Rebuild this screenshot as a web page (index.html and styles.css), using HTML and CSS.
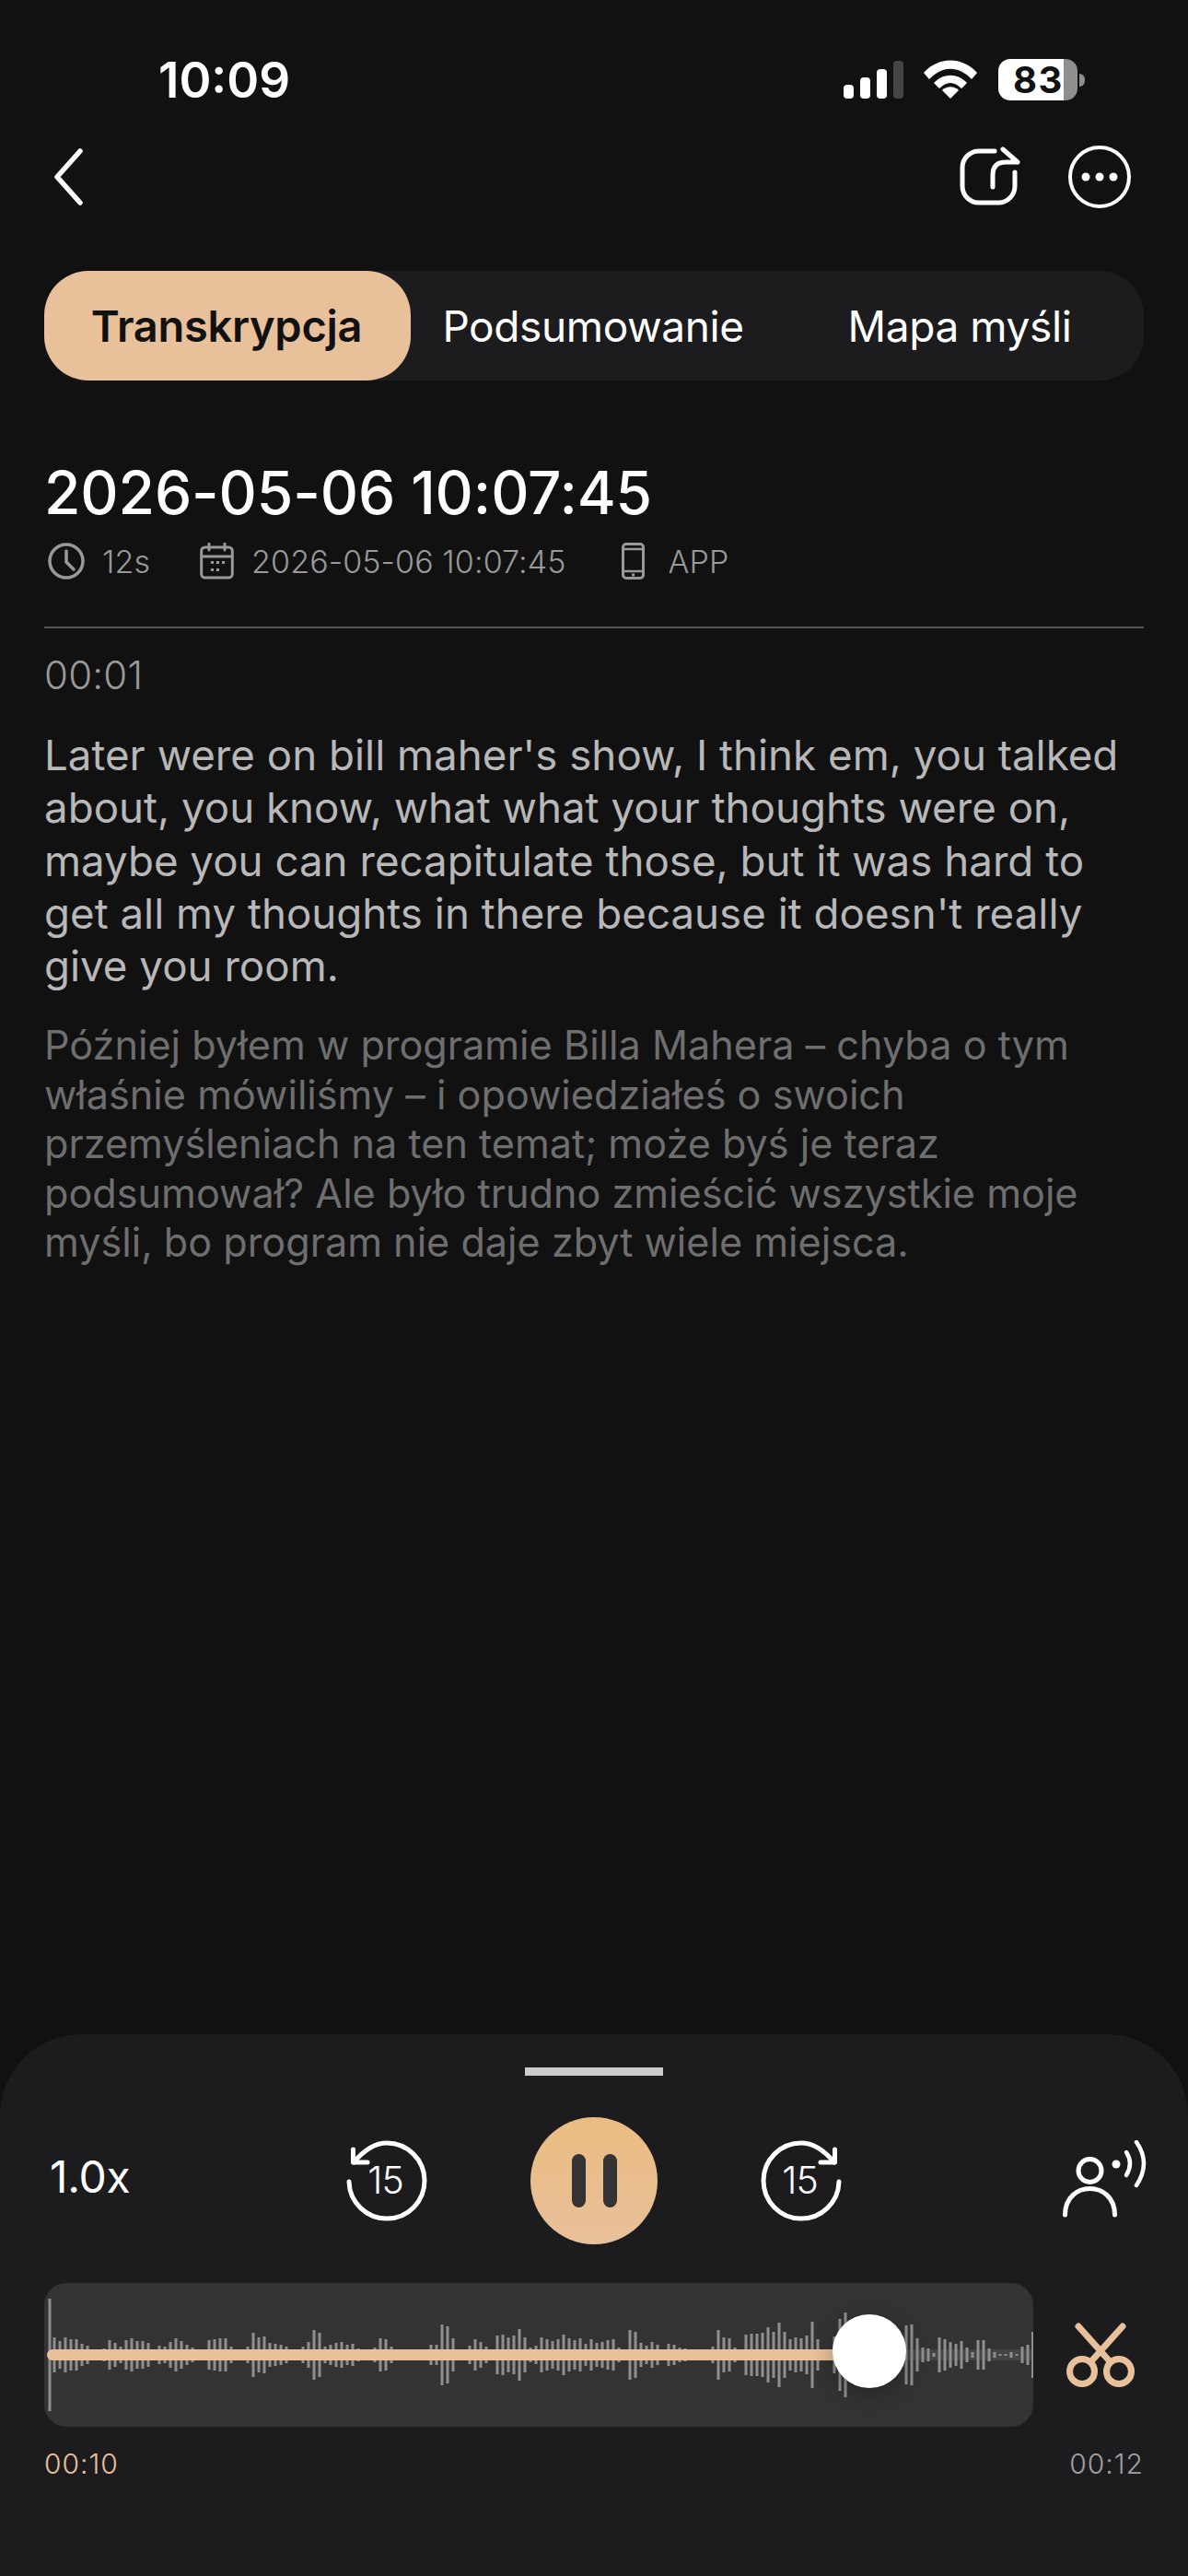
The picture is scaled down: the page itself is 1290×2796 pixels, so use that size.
FILE: index.html
```html
<!DOCTYPE html>
<html lang="pl">
<head>
<meta charset="utf-8">
<title>Transkrypcja</title>
<link rel="stylesheet" href="styles.css">
</head>
<body>
<div class="screen">
  <header class="status">
    <span class="clock">10:09</span>
    <div class="status-icons">
      <svg class="signal" width="65" height="41" viewBox="0 0 65 41"><rect x="0" y="26" width="11" height="15" rx="4" fill="#fff"/><rect x="18" y="18" width="11" height="23" rx="4" fill="#fff"/><rect x="36" y="9" width="11" height="32" rx="4" fill="#fff"/><rect x="54" y="0" width="11" height="41" rx="4" fill="#444"/></svg>
      <svg class="wifi" width="58" height="42" viewBox="0 0 58 42"><path d="M0 14 C16 -4 42 -4 58 14 L52 21 C38 6 20 6 6 21Z" fill="#fff"/><path d="M11 25 C21 14 37 14 47 25 L41 31 C33 23 25 23 17 31Z" fill="#fff"/><path d="M20 33 C25 28 33 28 38 33 L29 42Z" fill="#fff"/></svg>
      <div class="battery"><div class="battery-body"><span class="battery-text">83</span></div><span class="battery-cap"></span></div>
    </div>
  </header>

  <nav class="nav">
    <svg class="back" width="31" height="62" viewBox="0 0 31 62"><path d="M28 3 L3 31 L28 59" fill="none" stroke="#fff" stroke-width="5.500" stroke-linecap="round" stroke-linejoin="round"/></svg>
    <div class="nav-actions">
      <svg width="66" height="66" viewBox="0 0 66 66"><path d="M38 5 H22 A18 18 0 0 0 3 23 V43 A18 18 0 0 0 22 61 H42 A18 18 0 0 0 60 43 V28" fill="none" stroke="#fff" stroke-width="5" stroke-linecap="round"/><path d="M36 44 V31 Q36 17 50 17 H62 M47 3 L63 17" fill="none" stroke="#fff" stroke-width="5" stroke-linecap="round" stroke-linejoin="round"/></svg>
      <svg width="68" height="68" viewBox="0 0 68 68"><circle cx="34" cy="34" r="32" fill="none" stroke="#fff" stroke-width="4"/><circle cx="19" cy="34" r="4.500" fill="#fff"/><circle cx="34" cy="34" r="4.500" fill="#fff"/><circle cx="49" cy="34" r="4.500" fill="#fff"/></svg>
    </div>
  </nav>

  <div class="tabs">
    <span class="tab tab-active">Transkrypcja</span>
    <span class="tab">Podsumowanie</span>
    <span class="tab">Mapa myśli</span>
  </div>

  <main class="content">
    <h1 class="title">2026-05-06 10:07:45</h1>
    <div class="meta">
      <span class="meta-item meta-dur">
        <svg width="40" height="40" viewBox="0 0 40 40"><circle cx="20" cy="20" r="18" fill="none" stroke="#999" stroke-width="3.500"/><path d="M20 9 V21 L28 29" fill="none" stroke="#999" stroke-width="3.500" stroke-linecap="round" stroke-linejoin="round"/></svg>
        12s
      </span>
      <span class="meta-item meta-date">
        <svg width="37" height="40" viewBox="0 0 37 40"><rect x="1.700" y="5" width="33.600" height="33" rx="4" fill="none" stroke="#999" stroke-width="3"/><path d="M2 15 H35 M10 1 V8 M27 1 V8" stroke="#999" stroke-width="3" stroke-linecap="round"/><g fill="#999"><rect x="12" y="20" width="3" height="3"/><rect x="18" y="20" width="3" height="3"/><rect x="24" y="20" width="3" height="3"/><rect x="12" y="28" width="3" height="3"/><rect x="18" y="28" width="3" height="3"/></g></svg>
        2026-05-06 10:07:45
      </span>
      <span class="meta-item meta-src">
        <svg width="25" height="40" viewBox="0 0 25 40"><rect x="1.500" y="1.500" width="22" height="37" rx="3.500" fill="none" stroke="#999" stroke-width="3"/><path d="M2 7 H23 M2 31 H23" stroke="#999" stroke-width="2.500"/><rect x="11" y="33.500" width="3" height="3" fill="#999"/></svg>
        APP
      </span>
    </div>
    <hr class="divider">
    <div class="stamp">00:01</div>
    <p class="source">Later were on bill maher's show, I think em, you talked<br>about, you know, what what your thoughts were on,<br>maybe you can recapitulate those, but it was hard to<br>get all my thoughts in there because it doesn't really<br>give you room.</p>
    <p class="translation">Później byłem w programie Billa Mahera – chyba o tym<br>właśnie mówiliśmy – i opowiedziałeś o swoich<br>przemyśleniach na ten temat; może byś je teraz<br>podsumował? Ale było trudno zmieścić wszystkie moje<br>myśli, bo program nie daje zbyt wiele miejsca.</p>
  </main>

  <section class="player">
    <div class="handle"></div>
    <div class="controls">
      <span class="speed">1.0x</span>
      <div class="transport">
        <div class="skip">
          <svg width="90" height="90" viewBox="0 0 90 90"><path d="M4 46 A41 41 0 1 0 45 4 Q27 4 9 25" fill="none" stroke="#fff" stroke-width="5" stroke-linecap="round"/><path d="M8.500 11 V25 H24" fill="none" stroke="#fff" stroke-width="5" stroke-linecap="round" stroke-linejoin="round"/></svg>
          <span class="skip-num">15</span>
        </div>
        <div class="play">
          <span class="pause-bar"></span><span class="pause-bar"></span>
        </div>
        <div class="skip">
          <svg width="90" height="90" viewBox="0 0 90 90"><path d="M86 46 A41 41 0 1 1 45 4 Q63 4 81 25" fill="none" stroke="#fff" stroke-width="5" stroke-linecap="round"/><path d="M81.500 11 V25 H66" fill="none" stroke="#fff" stroke-width="5" stroke-linecap="round" stroke-linejoin="round"/></svg>
          <span class="skip-num">15</span>
        </div>
      </div>
      <svg class="speaker" width="93" height="84" viewBox="0 0 93 84"><ellipse cx="29.500" cy="33" rx="12.500" ry="12.500" fill="none" stroke="#fff" stroke-width="5"/><path d="M2.500 81 C2.500 43 56.500 43 56.500 81" fill="none" stroke="#fff" stroke-width="5" stroke-linecap="round"/><circle cx="58" cy="26" r="4.500" fill="#fff"/><path d="M69 13 Q77 25 69 38" fill="none" stroke="#fff" stroke-width="4.500" stroke-linecap="round"/><path d="M80 2 Q96 25 80 49" fill="none" stroke="#fff" stroke-width="4.500" stroke-linecap="round"/></svg>
    </div>
    <div class="scrub">
      <div class="wave-panel">
        <svg class="wave" width="1074" height="156" viewBox="48 2478 1074 156">
          <rect x="948" y="2550" width="174" height="12" fill="#fff" opacity=".09"/>
          <g fill="#8f8f8f">
            <rect x="52.500" y="2495" width="3" height="122"/><rect x="57.500" y="2537" width="3" height="38"/><rect x="63.500" y="2541" width="3" height="30"/><rect x="69.500" y="2537" width="3" height="38"/><rect x="75.500" y="2539" width="3" height="34"/><rect x="81.500" y="2539" width="3" height="34"/><rect x="87.500" y="2544" width="3" height="24"/><rect x="93.500" y="2546" width="3" height="20"/>
            <rect x="111.500" y="2549" width="3" height="14"/><rect x="117.500" y="2540" width="3" height="32"/><rect x="123.500" y="2543" width="3" height="26"/><rect x="129.500" y="2547" width="3" height="18"/><rect x="135.500" y="2540" width="3" height="32"/><rect x="141.500" y="2538" width="3" height="36"/><rect x="147.500" y="2541" width="3" height="30"/><rect x="153.500" y="2541" width="3" height="30"/><rect x="159.500" y="2543" width="3" height="26"/><rect x="165.500" y="2550" width="3" height="12"/><rect x="171.500" y="2546" width="3" height="20"/><rect x="177.500" y="2547" width="3" height="18"/><rect x="183.500" y="2542" width="3" height="28"/><rect x="189.500" y="2538" width="3" height="36"/><rect x="195.500" y="2541" width="3" height="30"/><rect x="201.500" y="2545" width="3" height="22"/><rect x="207.500" y="2548" width="3" height="16"/>
            <rect x="225.500" y="2540" width="3" height="32"/><rect x="231.500" y="2539" width="3" height="34"/><rect x="237.500" y="2538" width="3" height="36"/><rect x="243.500" y="2538" width="3" height="36"/><rect x="249.500" y="2547" width="3" height="18"/>
            <rect x="267.500" y="2547" width="3" height="18"/><rect x="273.500" y="2532" width="3" height="48"/><rect x="279.500" y="2537" width="3" height="38"/><rect x="285.500" y="2536" width="3" height="40"/><rect x="291.500" y="2543" width="3" height="26"/><rect x="297.500" y="2544" width="3" height="24"/><rect x="303.500" y="2545" width="3" height="22"/><rect x="309.500" y="2547" width="3" height="18"/>
            <rect x="327.500" y="2547" width="3" height="18"/><rect x="333.500" y="2542" width="3" height="28"/><rect x="339.500" y="2529" width="3" height="54"/><rect x="345.500" y="2532" width="3" height="48"/><rect x="351.500" y="2547" width="3" height="18"/><rect x="357.500" y="2545" width="3" height="22"/><rect x="363.500" y="2543" width="3" height="26"/><rect x="369.500" y="2542" width="3" height="28"/><rect x="375.500" y="2545" width="3" height="22"/><rect x="381.500" y="2544" width="3" height="24"/><rect x="387.500" y="2549" width="3" height="14"/>
            <rect x="405.500" y="2548" width="3" height="16"/><rect x="411.500" y="2538" width="3" height="36"/><rect x="417.500" y="2539" width="3" height="34"/><rect x="423.500" y="2547" width="3" height="18"/><rect x="429.500" y="2550" width="3" height="12"/>
            <rect x="466.500" y="2545" width="3" height="22"/><rect x="472.500" y="2545" width="3" height="22"/><rect x="478.500" y="2523" width="3" height="66"/><rect x="484.500" y="2525" width="3" height="62"/><rect x="490.500" y="2538" width="3" height="36"/>
            <rect x="508.500" y="2546" width="3" height="20"/><rect x="514.500" y="2539" width="3" height="34"/><rect x="520.500" y="2542" width="3" height="28"/><rect x="526.500" y="2547" width="3" height="18"/>
            <rect x="538.500" y="2535" width="3" height="42"/><rect x="544.500" y="2534" width="3" height="44"/><rect x="550.500" y="2537" width="3" height="38"/><rect x="556.500" y="2535" width="3" height="42"/><rect x="562.500" y="2528" width="3" height="56"/><rect x="568.500" y="2537" width="3" height="38"/><rect x="574.500" y="2548" width="3" height="16"/><rect x="580.500" y="2546" width="3" height="20"/><rect x="586.500" y="2537" width="3" height="38"/><rect x="592.500" y="2539" width="3" height="34"/><rect x="598.500" y="2541" width="3" height="30"/><rect x="604.500" y="2539" width="3" height="34"/><rect x="610.500" y="2534" width="3" height="44"/><rect x="616.500" y="2538" width="3" height="36"/><rect x="622.500" y="2540" width="3" height="32"/><rect x="628.500" y="2538" width="3" height="36"/><rect x="634.500" y="2544" width="3" height="24"/><rect x="640.500" y="2539" width="3" height="34"/><rect x="646.500" y="2543" width="3" height="26"/><rect x="652.500" y="2542" width="3" height="28"/><rect x="658.500" y="2540" width="3" height="32"/><rect x="664.500" y="2539" width="3" height="34"/><rect x="670.500" y="2548" width="3" height="16"/>
            <rect x="682.500" y="2529" width="3" height="54"/><rect x="688.500" y="2531" width="3" height="50"/><rect x="694.500" y="2543" width="3" height="26"/><rect x="700.500" y="2546" width="3" height="20"/><rect x="706.500" y="2542" width="3" height="28"/><rect x="712.500" y="2545" width="3" height="22"/>
            <rect x="724.500" y="2544" width="3" height="24"/><rect x="730.500" y="2545" width="3" height="22"/><rect x="736.500" y="2548" width="3" height="16"/><rect x="742.500" y="2549" width="3" height="14"/>
            <rect x="772.500" y="2547" width="3" height="18"/><rect x="778.500" y="2529" width="3" height="54"/><rect x="784.500" y="2537" width="3" height="38"/><rect x="790.500" y="2538" width="3" height="36"/><rect x="796.500" y="2548" width="3" height="16"/>
            <rect x="808.500" y="2534" width="3" height="44"/><rect x="814.500" y="2533" width="3" height="46"/><rect x="820.500" y="2533" width="3" height="46"/><rect x="826.500" y="2532" width="3" height="48"/><rect x="832.500" y="2526" width="3" height="60"/><rect x="838.500" y="2531" width="3" height="50"/><rect x="844.500" y="2521" width="3" height="70"/><rect x="850.500" y="2531" width="3" height="50"/><rect x="856.500" y="2539" width="3" height="34"/><rect x="862.500" y="2537" width="3" height="38"/><rect x="868.500" y="2538" width="3" height="36"/><rect x="874.500" y="2535" width="3" height="42"/><rect x="880.500" y="2520" width="3" height="72"/><rect x="886.500" y="2539" width="3" height="34"/>
            <rect x="904.500" y="2536" width="3" height="40"/><rect x="910.500" y="2517" width="3" height="78"/><rect x="916.500" y="2510" width="3" height="92"/>
            <rect x="982.500" y="2524" width="3" height="64"/><rect x="988.500" y="2523" width="3" height="66"/><rect x="994.500" y="2538" width="3" height="36"/><rect x="1000.500" y="2548" width="3" height="16"/><rect x="1006.500" y="2549" width="3" height="14"/><rect x="1012.500" y="2554" width="3" height="4"/><rect x="1018.500" y="2537" width="3" height="38"/><rect x="1024.500" y="2539" width="3" height="34"/><rect x="1030.500" y="2542" width="3" height="28"/><rect x="1036.500" y="2544" width="3" height="24"/><rect x="1042.500" y="2541" width="3" height="30"/><rect x="1048.500" y="2548" width="3" height="16"/><rect x="1054.500" y="2553" width="3" height="6"/><rect x="1060.500" y="2540" width="3" height="32"/><rect x="1066.500" y="2540" width="3" height="32"/><rect x="1072.500" y="2549" width="3" height="14"/><rect x="1078.500" y="2553" width="3" height="6"/><rect x="1084.500" y="2555" width="3" height="2"/><rect x="1090.500" y="2555" width="3" height="2"/><rect x="1096.500" y="2553" width="3" height="6"/><rect x="1102.500" y="2555" width="3" height="2"/><rect x="1108.500" y="2547" width="3" height="18"/><rect x="1114.500" y="2545" width="3" height="22"/><rect x="1120" y="2531" width="2" height="50"/>
          </g>
          <path d="M57 2550 H944 V2562 H57 A6 6 0 0 1 57 2550Z" fill="#e8c09a"/>
        </svg>
        <span class="thumb"></span>
      </div>
      <svg class="scissors" width="74" height="72" viewBox="0 0 74 72"><circle cx="17" cy="54" r="13.500" fill="none" stroke="#e8c09a" stroke-width="7"/><circle cx="57" cy="54" r="13.500" fill="none" stroke="#e8c09a" stroke-width="7"/><path d="M13 5 L47 43 M61 5 L27 43" fill="none" stroke="#e8c09a" stroke-width="7" stroke-linecap="round"/></svg>
    </div>
    <div class="times">
      <span class="time-now">00:10</span>
      <span class="time-total">00:12</span>
    </div>
  </section>
</div>
</body>
</html>
```

FILE: styles.css
```css
* { box-sizing: border-box; }
html, body { margin: 0; padding: 0; }
body { background: #111112; font-family: Inter, "Noto Sans", sans-serif; color: #fff; }
.screen { width: 1290px; height: 2796px; display: flex; flex-direction: column; overflow: hidden; background: #111112; }

.status { margin-top: 50px; height: 59px; padding: 0 112px 0 172px; display: flex; justify-content: space-between; align-items: flex-end; flex: none; }
.clock { font-size: 53px; font-weight: 600; line-height: 57px; margin-bottom: -7px; }
.status-icons { display: flex; align-items: flex-end; }
.signal { margin: 0 22px 2px 0; }
.wifi { margin: 0 23px 2px 0; }
.battery { display: flex; align-items: center; height: 45px; }
.battery-body { width: 86px; height: 45px; border-radius: 13px; background: linear-gradient(90deg, #fff 82.500%, #8e8e8e 82.500%); padding-left: 16px; line-height: 45px; }
.battery-text { color: #111; font-size: 40px; font-weight: 700; letter-spacing: 1.500px; }
.battery-cap { width: 6px; height: 14px; margin-left: 2px; background: #8e8e8e; border-radius: 0 6px 6px 0; }

.nav { margin-top: 49px; padding: 0 62px 0 59px; display: flex; justify-content: space-between; align-items: center; height: 68px; flex: none; }
.nav-actions { display: flex; align-items: center; gap: 52px; }

.tabs { margin: 68px 48px 0; height: 119px; border-radius: 48px; background: #1c1c1e; display: flex; align-items: center; flex: none; }
.tab { flex: 1; height: 119px; padding-right: 2px; display: flex; align-items: center; justify-content: center; font-size: 46px; font-weight: 400; border-radius: 48px; letter-spacing: -0.4px; }
.tab-active { background: #e8c09a; color: #111; font-size: 47px; font-weight: 600; letter-spacing: -0.3px; flex: none; width: 398px; }

.content { padding: 0 48px; flex: 1; min-height: 0; }
.title { margin: 84px 0 0; font-size: 64px; line-height: 76px; font-weight: 500; letter-spacing: -0.1px; }
.meta { margin-top: 16px; display: flex; align-items: center; height: 40px; font-size: 34px; font-weight: 300; color: #999; letter-spacing: .1px; }
.meta-item { display: flex; align-items: center; gap: 19px; }
.meta-dur { margin-left: 4px; margin-right: 54px; }
.meta-date { margin-right: 60px; }
.meta-src { gap: 26px; }
.divider { border: 0; height: 2px; background: #555; margin: 51px 0 0; }
.stamp { margin-top: 28px; font-size: 42px; line-height: 46px; font-weight: 300; color: #999; letter-spacing: .2px; }
.source { margin: 35px 0 0; font-size: 45.700px; line-height: 57.300px; font-weight: 400; color: #b8b8b8; white-space: nowrap; }
.translation { margin: 31px 0 0; font-size: 43.200px; line-height: 53.500px; font-weight: 400; color: #6e6e6e; white-space: nowrap; }

.player { flex: none; height: 588px; background: #1c1c1e; border-radius: 88px 88px 0 0; padding-top: 36px; }
.handle { width: 150px; height: 9px; background: #ccc; margin: 0 auto; }
.controls { margin-top: 45px; height: 138px; padding: 0 43px; display: grid; grid-template-columns: 1fr auto 1fr; align-items: center; }
.speed { margin: 0 0 10px 11px; font-size: 48px; font-weight: 400; letter-spacing: -0.3px; }
.transport { display: flex; align-items: center; gap: 111px; }
.skip { position: relative; width: 90px; height: 90px; }
.skip-num { position: absolute; left: 0; right: 3px; top: 21px; text-align: center; font-size: 41px; line-height: 46px; font-weight: 300; letter-spacing: -1px; }
.play { width: 138px; height: 138px; border-radius: 50%; background: linear-gradient(180deg, #ebbc81, #e8c09a); display: flex; align-items: center; justify-content: center; gap: 19px; }
.pause-bar { width: 15px; height: 58px; border-radius: 8px; background: #333; }
.speaker { justify-self: end; margin-top: -4px; }
.scrub { margin-top: 42px; padding: 0 58px 0 48px; display: flex; align-items: center; justify-content: space-between; }
.wave-panel { position: relative; width: 1074px; height: 156px; border-radius: 24px; background: #333; overflow: hidden; }
.wave { display: block; }
.thumb { position: absolute; left: 856px; top: 34px; width: 80px; height: 80px; border-radius: 50%; background: #fff; box-shadow: 0 6px 24px rgba(0, 0, 0, .28); }
.times { margin-top: 22px; padding: 0 48px; display: flex; justify-content: space-between; font-size: 30px; line-height: 36px; font-weight: 300; letter-spacing: 1px; }
.time-now { color: #e8c09a; }
.time-total { color: #a0a0a0; }
```
